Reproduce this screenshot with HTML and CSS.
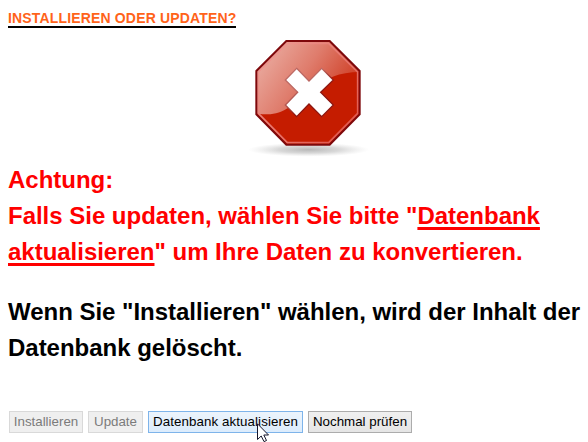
FILE: index.html
```html
<!DOCTYPE html>
<html lang="de">
<head>
<meta charset="utf-8">
<title>Installieren oder Updaten?</title>
<link rel="stylesheet" href="styles.css">
</head>
<body>
<h1 class="title"><span class="title-text">INSTALLIEREN ODER UPDATEN?</span></h1>
<div class="sign">
<svg class="sign-icon" viewBox="0 0 405 390" aria-hidden="true">
  <defs>
    <linearGradient id="gloss" gradientUnits="userSpaceOnUse" x1="70" y1="60" x2="300" y2="220">
      <stop offset="0" stop-color="#eaaca1"/>
      <stop offset=".5" stop-color="#df7c6c"/>
      <stop offset="1" stop-color="#cf3d24"/>
    </linearGradient>
    <linearGradient id="rim" x1="0" y1="0" x2="1" y2="1">
      <stop offset="0" stop-color="#ef9f98"/>
      <stop offset="1" stop-color="#df5148"/>
    </linearGradient>
    <linearGradient id="edge" gradientUnits="userSpaceOnUse" x1="150" y1="120" x2="260" y2="250">
      <stop offset=".35" stop-color="#bd6963"/>
      <stop offset=".65" stop-color="#8d1610"/>
    </linearGradient>
    <radialGradient id="shade">
      <stop offset="0" stop-color="#888" stop-opacity=".6"/>
      <stop offset=".5" stop-color="#999" stop-opacity=".38"/>
      <stop offset="1" stop-color="#bbb" stop-opacity="0"/>
    </radialGradient>
    <clipPath id="face"><path d="M139 33H269L359 123V253L269 344H139L49 253V123Z"/></clipPath>
  </defs>
  <ellipse cx="206" cy="359" rx="182" ry="21" fill="url(#shade)"/>
  <path d="M139 33H269L359 123V253L269 344H139L49 253V123Z" fill="#c51c00"/>
  <path clip-path="url(#face)" d="M40 20H370V126C300 125 260 142 218 177C165 222 130 253 83 253Q65 253 40 248Z" fill="url(#gloss)"/>
  <path d="M142 40H266L353 126V250L266 338H142L55 250V126Z" fill="none" stroke="url(#rim)" stroke-width="5"/>
  <path d="M139 33H269L359 123V253L269 344H139L49 253V123Z" fill="none" stroke="#7e080b" stroke-width="6"/>
  <path d="M170 115L207 153L245 115L280 150L242 187L280 225L245 260L207 222L170 260L136 225L173 187L136 150Z" fill="#fff" stroke="url(#edge)" stroke-width="4"/>
</svg>
</div>
<p class="message warning">Achtung:<br>Falls Sie updaten, wählen Sie bitte "<span class="marked">Datenbank</span><br><span class="marked">aktualisieren</span>" um Ihre Daten zu konvertieren.</p>
<p class="message">Wenn Sie "Installieren" wählen, wird der Inhalt der<br>Datenbank gelöscht.</p>
<div class="actions">
  <button class="btn install" disabled>Installieren</button>
  <button class="btn update" disabled>Update</button>
  <button class="btn convert">Datenbank aktualisieren
    <svg class="cursor" viewBox="0 0 12 19" aria-hidden="true"><path d="M.5 .8V16.5L4.2 13L7 18.6L9.5 17.5L6.8 12H11.5Z" fill="#fff" stroke="#15152a" stroke-width="1"/></svg>
  </button>
  <button class="btn check">Nochmal prüfen</button>
</div>
</body>
</html>
```
FILE: styles.css
```css
body {
  margin: 0;
  padding: 10px 0 0 8px;
  height: 442px;
  box-sizing: border-box;
  overflow: hidden;
  background: #fff;
  color: #000;
  font-family: "Liberation Sans", Arial, sans-serif;
}

.title {
  display: flex;
  margin: 0;
  height: 20px;
  font-size: 14px;
  line-height: 17px;
  letter-spacing: .16px;
  color: #ff6319;
}

.title-text {
  box-sizing: border-box;
  width: 228px;
  height: 18px;
  border-bottom: 2px solid #000;
  white-space: nowrap;
}

.sign {
  height: 132px;
  padding-left: 232px;
}

.sign-icon {
  display: block;
  width: 135px;
  height: 130px;
}

.message {
  margin: 0 0 24px;
  font-size: 24px;
  font-weight: bold;
  line-height: 36px;
  letter-spacing: -.02px;
  white-space: nowrap;
}

.warning {
  color: #f00;
}

.marked {
  text-decoration: underline;
  text-decoration-thickness: 3px;
  text-decoration-skip-ink: none;
  text-underline-offset: 3px;
}

.actions {
  display: flex;
  gap: 5px;
  margin: 45px 0 0 1px;
}

.btn {
  position: relative;
  box-sizing: border-box;
  height: 22px;
  padding: 0;
  border: 1px solid #acacac;
  background: linear-gradient(#f0f0f0, #e5e5e5);
  color: #000;
  font: 13.33px/20px "Liberation Sans", Arial, sans-serif;
  white-space: nowrap;
}

.btn:disabled {
  border-color: #d9d9d9;
  background: #efefef;
  color: #7b7b7b;
}

.install { width: 74px; }
.update { width: 55px; }
.check { width: 104px; }

.convert {
  width: 155px;
  border-color: #7eb4ea;
  background: linear-gradient(#ecf4fc, #dcecfc);
  letter-spacing: .08px;
}

.cursor {
  position: absolute;
  left: 108px;
  top: 11px;
  width: 12px;
  height: 19px;
}
```
